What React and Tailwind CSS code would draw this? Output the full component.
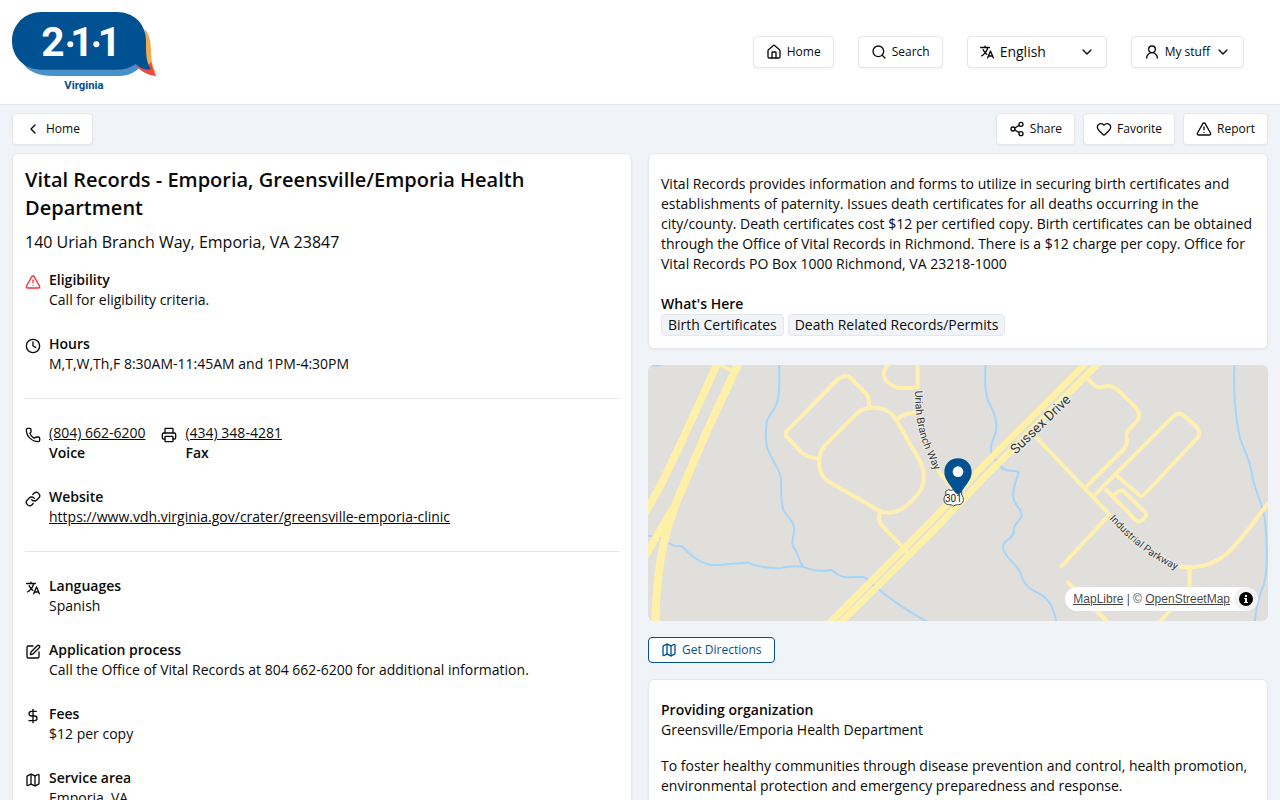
import {
  ChevronDown, ChevronLeft, Clock, DollarSign, Heart, House, Link, Map, Phone,
  Printer, Search, Share2, SquarePen, TriangleAlert, UserRound,
} from "lucide-react"
import { IoLanguage } from "react-icons/io5"

const cardStyle = "rounded-md border border-gray-200 bg-white shadow-xs"
const btnStyle = "flex h-8 items-center gap-[5px] rounded border border-gray-200 bg-white px-3 text-xs font-medium shadow-xs cursor-pointer hover:bg-gray-50"

const Logo = () => (
  <a href="#" aria-label="2-1-1 Virginia">
    <svg viewBox="0 0 435 240" className="h-20 w-[145px]">
      <path d="M398 50C420 75 416 115 418 138C420 158 425 170 434 184L400 160Z" fill="#f4a950" />
      <path d="M30 150H395C378 180 350 192 320 192H125C80 192 48 180 30 150Z" fill="#4a90ca" />
      <path d="M368 156L400 166L418 150C420 166 426 180 433 192C408 190 388 180 368 156Z" fill="#f0483e" />
      <path d="M88 0H314C366 0 402 36 402 86C402 128 402 150 417 172C400 174 386 169 371 156C352 169 336 173 314 173H88C38 173 0 136 0 87S38 0 88 0Z" fill="#005191" />
      <g fontFamily="Roboto, sans-serif" fontWeight="700">
        <text x="88" y="131" fontSize="122" fill="#fff">2</text>
        <text x="175" y="131" fontSize="122" fill="#fff">1</text>
        <text x="257" y="131" fontSize="122" fill="#fff">1</text>
        <text x="216" y="232" fontSize="34" fill="#005191" textAnchor="middle">Virginia</text>
      </g>
      <circle cx="175" cy="97" r="9" fill="#fff" />
      <circle cx="253" cy="97" r="9" fill="#fff" />
    </svg>
  </a>
)

const Header = () => (
  <header className="flex items-center justify-between border-b border-gray-200 bg-white py-3 pr-9 pl-3">
    <Logo />
    <nav className="flex items-center gap-6">
      <button className={btnStyle}><House size={16} />Home</button>
      <button className={btnStyle}><Search size={16} />Search</button>
      <div className="relative">
        <IoLanguage size={16} className="pointer-events-none absolute top-2 left-3" />
        <select
          aria-label="Language"
          className="h-8 w-[140px] cursor-pointer appearance-none rounded border border-gray-200 bg-white pr-8 pl-8 text-sm shadow-xs"
        >
          <option>English</option>
          <option>Español</option>
        </select>
        <ChevronDown size={16} className="pointer-events-none absolute top-2 right-3" />
      </div>
      <button className={btnStyle}><UserRound size={16} />My stuff<ChevronDown size={16} /></button>
    </nav>
  </header>
)

const Detail = ({ icon: Icon, title, iconClass = "", children }) => (
  <div className="flex gap-2">
    <Icon size={16} className={`mt-1 shrink-0 ${iconClass}`} />
    <div>
      <h2 className="font-semibold">{title}</h2>
      <div>{children}</div>
    </div>
  </div>
)

const PhoneNumber = ({ icon: Icon, number, label }) => (
  <div className="flex gap-2">
    <Icon size={16} className="mt-1 shrink-0" />
    <div>
      <a href={`tel:${number}`} className="underline">{number}</a>
      <p className="font-semibold">{label}</p>
    </div>
  </div>
)

const LocationMap = () => (
  <div className="relative h-64 overflow-hidden rounded-md bg-[#e0dfdc]">
    <svg viewBox="0 3 1860 768" preserveAspectRatio="xMidYMid slice" className="h-full w-full" fill="none">
      {/* creeks */}
      <g stroke="#a6d5fa" strokeWidth="6" strokeLinejoin="round">
        <path d="M393 0C395 50 393 95 388 110C380 145 358 155 356 175Q352 205 355 240C362 280 395 310 398 340C402 375 396 405 406 438C416 458 436 465 439 495C437 520 428 530 436 550C454 570 450 590 464 606" />
        <path d="M0 515L40 522L62 537Q80 550 100 546C120 563 145 595 185 602C220 608 240 596 300 596C325 606 340 610 395 613Q430 604 464 608Q505 626 550 618C570 630 575 640 600 640C650 636 650 636 665 655C720 700 790 750 840 774" />
        <path d="M1013 0C1010 45 1010 80 1020 110C1045 155 1048 180 1043 205C1028 250 1020 255 1040 285L1065 315C1085 325 1100 315 1112 325C1105 355 1092 370 1096 400C1100 430 1125 435 1121 455C1115 475 1098 475 1097 500C1100 528 1060 525 1066 555C1075 590 1115 600 1122 640C1135 680 1170 680 1195 704Q1218 730 1225 774" />
        <path d="M1760 0C1755 70 1760 140 1774 215C1790 270 1810 290 1812 335C1820 380 1850 430 1852 480C1856 540 1862 600 1848 660C1835 690 1825 720 1820 774" />
        <path d="M8 2Q25 8 40 2" />
      </g>
      {/* highways */}
      <g stroke="#fff0a8" strokeLinecap="round" strokeLinejoin="round">
        <path d="M212 -10L100 235L40 360Q20 395 -10 450" strokeWidth="23" />
        <path d="M275 -10L175 205L100 380C60 470 25 580 22 780" strokeWidth="24" />
        <path d="M70 440Q30 510 -10 580" strokeWidth="22" />
        <path d="M215 3L255 22" strokeWidth="10" />
        <path d="M541 780L846 475L1011 300L1322 -10" strokeWidth="20" />
        <path d="M575 780L846 511L1011 338L1359 -10" strokeWidth="20" />
        <path d="M765 556L785 572M596 728L606 738" strokeWidth="10" />
      </g>
      {/* local streets */}
      <g stroke="#fff0b0" strokeWidth="12" strokeLinecap="round" strokeLinejoin="round">
        <path d="M513 285Q475 280 460 265L415 217Q410 209 418 200L570 45Q592 30 607 42L655 90Q665 103 663 130" />
        <path d="M530 245L630 145Q650 130 680 131Q720 130 745 167L815 290Q837 330 820 375Q805 400 770 430Q735 454 697 442L540 352C505 325 507 275 530 245Z" />
        <path d="M745 167Q770 145 800 147" />
        <path d="M809 0V70Q790 73 750 72C700 55 695 20 730 -5" />
        <path d="M697 442Q687 465 702 485L775 560" />
        <path d="M870 320L920 380" />
        <path d="M1320 45L1340 65Q1350 74 1365 69Q1390 60 1408 76L1463 130Q1480 150 1468 170L1440 200Q1432 210 1437 225Q1438 245 1425 258L1318 365" />
        <path d="M1165 220L1385 452" />
        <path d="M1338 395L1578 155Q1597 142 1612 158L1647 190Q1660 206 1648 222L1490 390Q1480 403 1470 390L1410 338" />
        <path d="M1375 378L1465 470Q1474 475 1482 470L1493 458Q1497 450 1490 443L1425 380Q1417 375 1400 392" />
        <path d="M1385 452L1241 606" />
        <path d="M1570 600Q1595 612 1640 609C1740 600 1770 530 1865 413" />
        <path d="M1625 612V680M1260 655L1380 775M1570 735L1535 775" />
      </g>
      <defs>
        <path id="uriah" d="M801 80C802 180 812 225 875 350" />
        <path id="sussex" d="M1103 272L1283 97" />
        <path id="industrial" d="M1384 464C1440 525 1500 585 1620 634" />
      </defs>
      <g fontFamily="Roboto, sans-serif" fill="#333" stroke="#f4f3ee" strokeWidth="5" paintOrder="stroke">
        <text fontSize="32"><textPath href="#uriah">Uriah Branch Way</textPath></text>
        <text fontSize="41"><textPath href="#sussex">Sussex Drive</textPath></text>
        <text fontSize="31"><textPath href="#industrial">Industrial Parkway</textPath></text>
      </g>
      {/* route shield */}
      <path d="M893 382L902 377Q910 382 917 377Q924 382 932 377L941 382Q938 390 945 400C949 416 940 423 928 422Q920 423 917 426Q914 423 906 422C894 423 885 416 889 400Q896 390 893 382Z" fill="#fff" stroke="#444" strokeWidth="3" />
      {/* marker */}
      <path d="M930 283C906 283 889 301 889 324C889 347 905 360 920 384Q930 398 940 384C955 360 971 347 971 324C971 301 954 283 930 283Z" fill="#005191" />
      <circle cx="930" cy="323" r="16" fill="#fff" />
      <text x="916" y="413" fontSize="30" fontFamily="Roboto, sans-serif" fill="#222" textAnchor="middle">301</text>
    </svg>
    <div className="absolute right-2.5 bottom-2.5 flex h-6 items-center gap-1 rounded-full bg-white pl-2 font-['Liberation_Sans',sans-serif] text-xs text-black/75">
      <p>
        <a href="#" className="underline">MapLibre</a> | © <a href="#" className="underline">OpenStreetMap</a>
      </p>
      <button aria-label="Toggle attribution" className="flex size-6 items-center justify-center rounded-full bg-black/5">
        <svg viewBox="0 0 14 14" className="size-3.5">
          <circle cx="7" cy="7" r="7" fill="#000" />
          <path d="M6 3h2v2H6zM5 6h3v4h1v1H5v-1h1V7H5z" fill="#fff" />
        </svg>
      </button>
    </div>
  </div>
)

const App = () => {
  return (
    <div className="h-screen overflow-hidden bg-[#f0f4f8] font-['Open_Sans',sans-serif] text-sm text-neutral-950">
      <Header />
      <div className="flex items-center justify-between px-3 py-2">
        <button className={btnStyle}><ChevronLeft size={16} />Home</button>
        <div className="flex gap-2">
          <button className={btnStyle}><Share2 size={16} />Share</button>
          <button className={btnStyle}><Heart size={16} />Favorite</button>
          <button className={btnStyle}><TriangleAlert size={16} />Report</button>
        </div>
      </div>

      <main className="grid grid-cols-2 items-start gap-4 px-3 pb-3">
        <section className={`${cardStyle} p-3`}>
          <h1 className="text-xl font-semibold">
            Vital Records - Emporia, Greensville/Emporia Health Department
          </h1>
          <p className="mt-2 text-base">140 Uriah Branch Way, Emporia, VA 23847</p>
          <div className="mt-4 flex flex-col gap-6">
            <Detail icon={TriangleAlert} title="Eligibility" iconClass="text-red-500">Call for eligibility criteria.</Detail>
            <Detail icon={Clock} title="Hours">M,T,W,Th,F 8:30AM-11:45AM and 1PM-4:30PM</Detail>
            <hr className="border-gray-200" />
            <div className="flex gap-4">
              <PhoneNumber icon={Phone} number="(804) 662-6200" label="Voice" />
              <PhoneNumber icon={Printer} number="(434) 348-4281" label="Fax" />
            </div>
            <Detail icon={Link} title="Website">
              <a href="#" className="underline">https://www.vdh.virginia.gov/crater/greensville-emporia-clinic</a>
            </Detail>
            <hr className="border-gray-200" />
            <Detail icon={IoLanguage} title="Languages">Spanish</Detail>
            <Detail icon={SquarePen} title="Application process">
              Call the Office of Vital Records at 804 662-6200 for additional information.
            </Detail>
            <Detail icon={DollarSign} title="Fees">$12 per copy</Detail>
            <Detail icon={Map} title="Service area">Emporia, VA</Detail>
          </div>
        </section>

        <div className="flex flex-col gap-4">
          <section className={`${cardStyle} px-3 pt-5 pb-3`}>
            <p>
              Vital Records provides information and forms to utilize in securing birth certificates and
              establishments of paternity. Issues death certificates for all deaths occurring in the
              city/county. Death certificates cost $12 per certified copy. Birth certificates can be obtained
              through the Office of Vital Records in Richmond. There is a $12 charge per copy. Office for
              Vital Records PO Box 1000 Richmond, VA 23218-1000
            </p>
            <h2 className="mt-5 font-semibold">What&apos;s Here</h2>
            <ul className="flex flex-wrap gap-1">
              <li className="rounded border border-gray-200 bg-[#f0f4f8] px-1.5">Birth Certificates</li>
              <li className="rounded border border-gray-200 bg-[#f0f4f8] px-1.5">Death Related Records/Permits</li>
            </ul>
          </section>

          <LocationMap />

          <button className="flex h-[26px] cursor-pointer items-center gap-[5px] self-start rounded border border-[#005191] bg-white px-3 text-xs font-medium text-[#005191]">
            <Map size={16} />Get Directions
          </button>

          <section className={`${cardStyle} px-3 py-5`}>
            <h2 className="font-semibold">Providing organization</h2>
            <p>Greensville/Emporia Health Department</p>
            <p className="mt-4">
              To foster healthy communities through disease prevention and control, health promotion,
              environmental protection and emergency preparedness and response.
            </p>
          </section>
        </div>
      </main>
    </div>
  )
}

export default App
